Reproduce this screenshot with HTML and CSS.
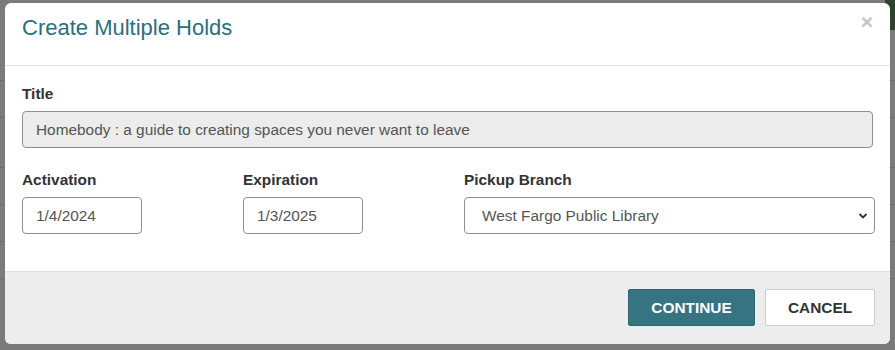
FILE: index.html
```html
<!DOCTYPE html>
<html lang="en">
<head>
    <meta charset="UTF-8">
    <title>Create Multiple Holds</title>
    <link rel="stylesheet" href="styles.css">
</head>
<body>
    <div class="page-behind">
        <div class="behind-row"></div>
        <div class="behind-row"></div>
        <div class="behind-row"></div>
        <div class="behind-row"></div>
        <div class="behind-row"></div>
        <div class="behind-row"></div>
        <div class="behind-corner"></div>
    </div>

    <div class="modal">
        <div class="modal-header">
            <h4 class="modal-title">Create Multiple Holds</h4>
            <span class="modal-close">&times;</span>
        </div>

        <div class="modal-body">
            <div class="form-group">
                <label class="form-label">Title</label>
                <input class="form-input form-input-wide" type="text" value="Homebody : a guide to creating spaces you never want to leave" readonly>
            </div>

            <div class="form-row">
                <div class="form-group">
                    <label class="form-label">Activation</label>
                    <input class="form-input form-input-date" type="text" value="1/4/2024">
                </div>
                <div class="form-group">
                    <label class="form-label">Expiration</label>
                    <input class="form-input form-input-date" type="text" value="1/3/2025">
                </div>
                <div class="form-group">
                    <label class="form-label">Pickup Branch</label>
                    <div class="select-wrap">
                        <select class="form-input form-select">
                            <option>West Fargo Public Library</option>
                        </select>
                        <svg class="select-arrow" width="10" height="8" viewBox="0 0 10 8">
                            <path d="M1.5 2 L5 5.5 L8.5 2" fill="none" stroke="#333" stroke-width="1.8"/>
                        </svg>
                    </div>
                </div>
            </div>
        </div>

        <div class="modal-footer">
            <button class="btn btn-primary">CONTINUE</button>
            <button class="btn btn-default">CANCEL</button>
        </div>
    </div>
</body>
</html>
```

FILE: styles.css
```css
* {
    box-sizing: border-box;
    font-family: 'Liberation Sans', Arial, sans-serif;
}

body {
    margin: 0;
    width: 895px;
    height: 350px;
    overflow: hidden;
    background: #7b7b7b;
    position: relative;
}

/* dimmed page underneath the modal */
.page-behind {
    padding-top: 80px;
}

.behind-row {
    height: 37px;
    border-top: 1px solid #6c6c6c;
}

.behind-row:nth-child(2) {
    height: 50px;
}

.behind-corner {
    position: absolute;
    top: 0;
    right: 0;
    width: 10px;
    height: 30px;
    background: #2c432c;
}

.modal {
    position: absolute;
    top: 3px;
    left: 5px;
    width: 885px;
    height: 341px;
    background: #fff;
    border-radius: 6px;
    overflow: hidden;
    display: flex;
    flex-direction: column;
}

.modal-header {
    display: flex;
    justify-content: space-between;
    align-items: flex-start;
    height: 63px;
    padding: 12px 17px 0 17px;
    border-bottom: 1px solid #e5e5e5;
}

.modal-title {
    margin: 0;
    font-size: 22px;
    font-weight: 400;
    color: #2b6f7e;
    line-height: 26px;
}

.modal-close {
    font-size: 21px;
    font-weight: 700;
    color: #c4c4c4;
    line-height: 14px;
    margin-top: 0;
}

.modal-body {
    flex: 1;
    padding: 19px 17px 0 17px;
}

.form-group {
    display: flex;
    flex-direction: column;
}

.form-label {
    font-size: 15.4px;
    font-weight: 700;
    color: #333;
    line-height: 17px;
    margin-bottom: 9px;
}

.form-input {
    height: 37px;
    border: 1px solid #8f8f8f;
    border-radius: 4px;
    padding: 0 13px;
    font-size: 15.4px;
    color: #555;
    background: #fff;
    outline: none;
}

.form-input-wide {
    width: 851px;
    background: #ececec;
}

.form-row {
    display: flex;
    gap: 101px;
    margin-top: 23px;
}

.form-input-date {
    width: 120px;
}

.select-wrap {
    position: relative;
    width: 411px;
}

.form-select {
    width: 100%;
    appearance: none;
    -webkit-appearance: none;
    padding-left: 17px;
}

.select-arrow {
    position: absolute;
    right: 7px;
    top: 15px;
}

.modal-footer {
    height: 73px;
    background: #ededed;
    border-top: 1px solid #e0e0e0;
    display: flex;
    justify-content: flex-end;
    align-items: flex-start;
    gap: 10px;
    padding: 17px 15px 0 0;
}

.btn {
    height: 37px;
    border-radius: 2px;
    font-size: 15.4px;
    font-weight: 700;
    cursor: pointer;
}

.btn-primary {
    width: 127px;
    background: #367482;
    border: 1px solid #2f6673;
    color: #fff;
}

.btn-default {
    width: 110px;
    background: #fff;
    border: 1px solid #ccc;
    color: #333;
}
```
